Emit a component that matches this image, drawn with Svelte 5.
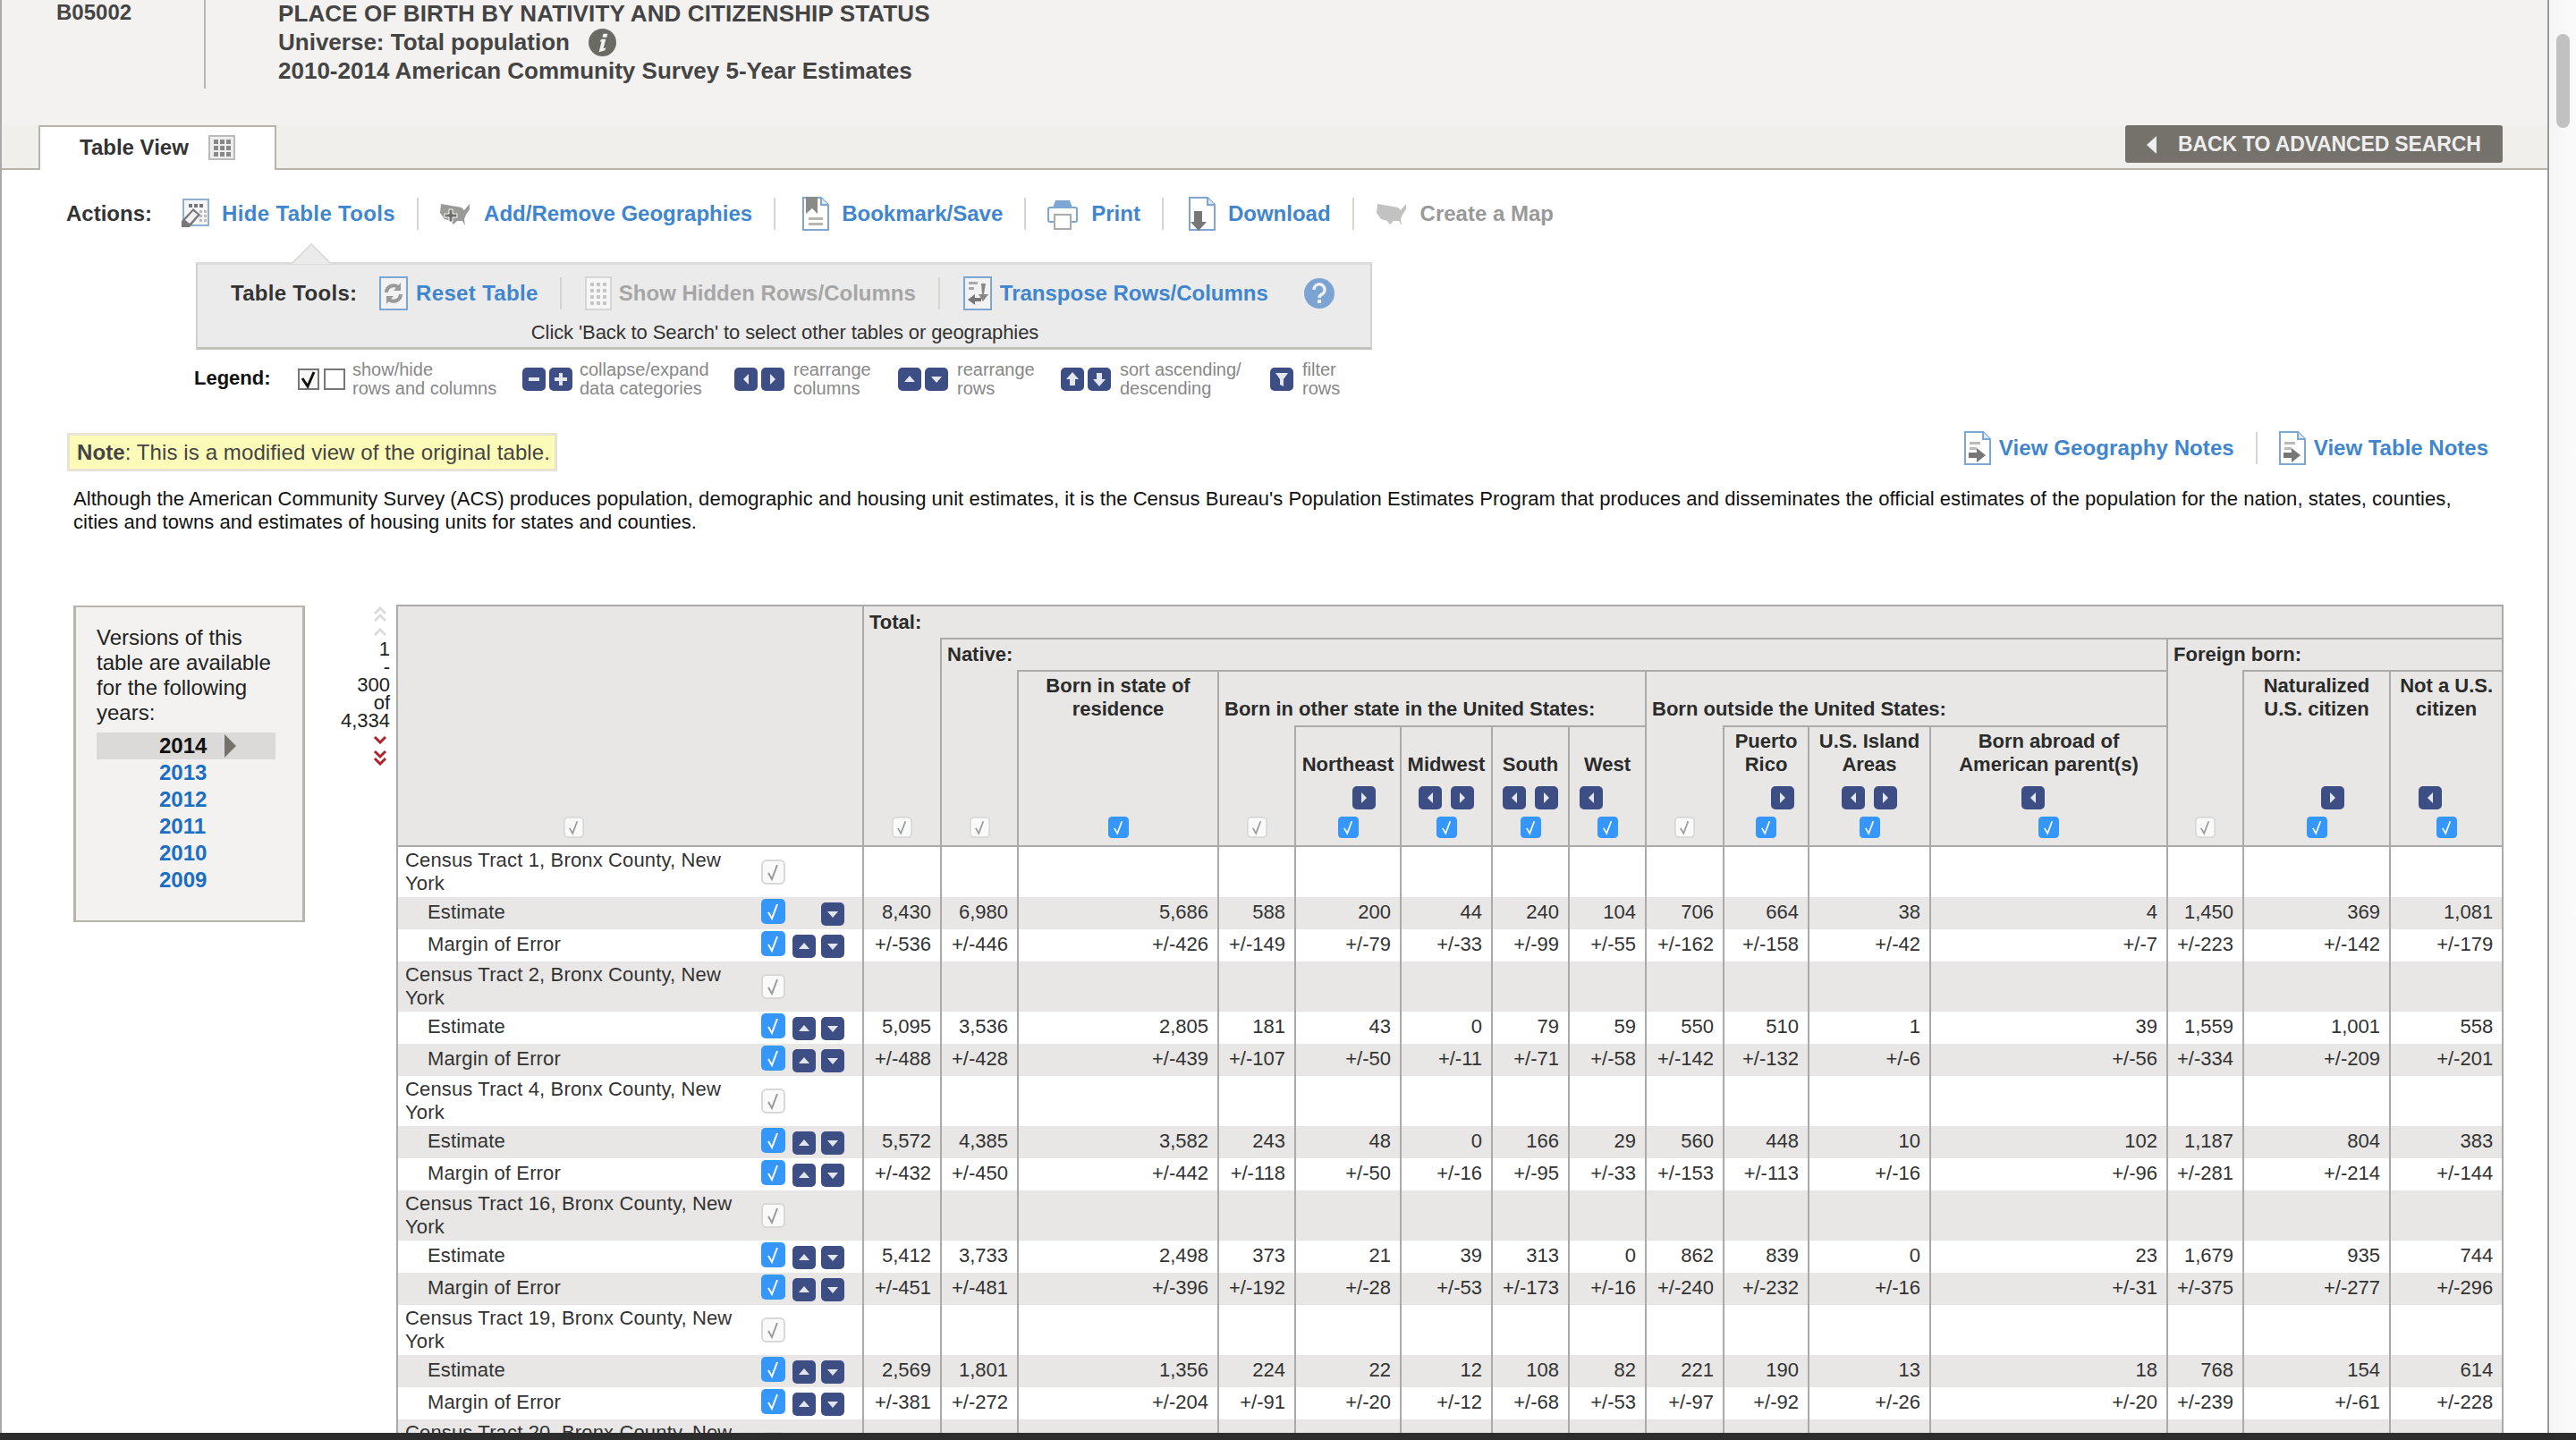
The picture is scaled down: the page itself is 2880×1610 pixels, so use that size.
<script>
  const tracts = [
    ['Census Tract 1, Bronx County, New York',
      '8,430 6,980 5,686 588 200 44 240 104 706 664 38 4 1,450 369 1,081',
      '+/-536 +/-446 +/-426 +/-149 +/-79 +/-33 +/-99 +/-55 +/-162 +/-158 +/-42 +/-7 +/-223 +/-142 +/-179'],
    ['Census Tract 2, Bronx County, New York',
      '5,095 3,536 2,805 181 43 0 79 59 550 510 1 39 1,559 1,001 558',
      '+/-488 +/-428 +/-439 +/-107 +/-50 +/-11 +/-71 +/-58 +/-142 +/-132 +/-6 +/-56 +/-334 +/-209 +/-201'],
    ['Census Tract 4, Bronx County, New York',
      '5,572 4,385 3,582 243 48 0 166 29 560 448 10 102 1,187 804 383',
      '+/-432 +/-450 +/-442 +/-118 +/-50 +/-16 +/-95 +/-33 +/-153 +/-113 +/-16 +/-96 +/-281 +/-214 +/-144'],
    ['Census Tract 16, Bronx County, New York',
      '5,412 3,733 2,498 373 21 39 313 0 862 839 0 23 1,679 935 744',
      '+/-451 +/-481 +/-396 +/-192 +/-28 +/-53 +/-173 +/-16 +/-240 +/-232 +/-16 +/-31 +/-375 +/-277 +/-296'],
    ['Census Tract 19, Bronx County, New York',
      '2,569 1,801 1,356 224 22 12 108 82 221 190 13 18 768 154 614',
      '+/-381 +/-272 +/-204 +/-91 +/-20 +/-12 +/-68 +/-53 +/-97 +/-92 +/-26 +/-20 +/-239 +/-61 +/-228'],
    ['Census Tract 20, Bronx County, New York', '', '']
  ];
  const rows = [];
  tracts.forEach((t, i) => {
    rows.push({ kind: 'tract', label: t[0], vals: Array(15).fill('') });
    rows.push({ kind: 'metric', label: 'Estimate', first: i === 0, vals: t[1] ? t[1].split(' ') : Array(15).fill('') });
    rows.push({ kind: 'metric', label: 'Margin of Error', vals: t[2] ? t[2].split(' ') : Array(15).fill('') });
  });
  const widths = [393, 126, 87, 86, 224, 86, 118, 102, 86, 86, 87, 95, 136, 265, 85, 164, 126];
  const controls = [
    { on: false }, { on: false }, { on: true }, { on: false },
    { on: true, r: true }, { on: true, l: true, r: true }, { on: true, l: true, r: true }, { on: true, l: true },
    { on: false }, { on: true, r: true }, { on: true, l: true, r: true }, { on: true, l: true },
    { on: false }, { on: true, r: true }, { on: true, l: true }
  ];
  const years = ['2013', '2012', '2011', '2010', '2009'];
</script>

{#snippet nav(dir, hidden = false)}
  <svg class="nav" class:vh={hidden} viewBox="0 0 26 26" aria-hidden="true">
    <rect width="26" height="26" rx="5" fill="#3d4e84" />
    {#if dir === 'l'}<path d="M16 7v12l-6-6z" fill="#e4e6ee" />
    {:else if dir === 'r'}<path d="M10 7v12l6-6z" fill="#e4e6ee" />
    {:else if dir === 'u'}<path d="M7 16h12l-6-7z" fill="#e4e6ee" />
    {:else if dir === 'd'}<path d="M7 10h12l-6 7z" fill="#e4e6ee" />
    {:else if dir === 'minus'}<path d="M7 11h12v4H7z" fill="#e4e6ee" />
    {:else if dir === 'plus'}<path d="M11 6h4v5h5v4h-5v5h-4v-5H6v-4h5z" fill="#e4e6ee" />
    {:else if dir === 'bu'}<path d="M13 5l7 8h-4v7h-6v-7H6z" fill="#e4e6ee" />
    {:else if dir === 'bd'}<path d="M13 21l7-8h-4V6h-6v7H6z" fill="#e4e6ee" />
    {:else}<path d="M6 6h14l-5 7v8l-4-2v-6z" fill="#e4e6ee" />{/if}
  </svg>
{/snippet}

{#snippet check(on, small = false)}
  <svg class="check" class:small viewBox="0 0 27 28" aria-hidden="true">
    {#if on}
      <rect width="27" height="28" rx="5" fill="#3596fb" />
      <path d="M8 15l4 7 6-16" fill="none" stroke="#fff" stroke-width="2" />
    {:else}
      <rect x="1" y="1" width="25" height="26" rx="5" fill="#fafafa" stroke="#d8d8d6" stroke-width="2" />
      <path d="M8 15l4 7 6-16" fill="none" stroke="#999" stroke-width="2" />
    {/if}
  </svg>
{/snippet}

{#snippet docIcon(kind)}
  <svg class="ic doc" viewBox="0 0 30 38" aria-hidden="true">
    <path d="M1 1h20l8 8v28H1z" fill="#fff" stroke="#7da6d2" stroke-width="2" />
    <path d="M21 1v8h8" fill="#dfe8f2" stroke="#7da6d2" stroke-width="2" />
    {#if kind === 'bookmark'}
      <path d="M4 0h13v19l-6-6-7 6z" fill="#8a8a86" />
      <path d="M7 23h16v3H7zM7 29h16v3H7z" fill="#b8b6ae" />
    {:else if kind === 'download'}
      <path d="M6 16h9v12h5l-9 10-9-10h4z" fill="#777" />
    {:else}
      <path d="M6 12h12v3H6zM6 18h8v3H6z" fill="#bdbbb4" />
      <path d="M5 24h9v-5l10 8-10 8v-5H5z" fill="#777" />
    {/if}
  </svg>
{/snippet}

{#snippet mapIcon(plus)}
  <svg class="ic map" viewBox="0 0 34 26" aria-hidden="true">
    <path d="M1 2l12 2 11 2 3 3 6-7v6l-4 6-2 5 1 7-3-5-6 0-4 4-3-4-7-2-5-7z" fill={plus ? '#9a9a96' : '#c2c2c0'} />
    {#if plus}<path d="M5 13h5v-5h4v5h5v4h-5v5h-4v-5H5z" fill="#6f6f6c" stroke="#fff" stroke-width="1" />{/if}
  </svg>
{/snippet}

{#snippet dots(x, y, cols, rowsN, step, size, fill)}
  {#each Array(rowsN) as _, r}
    {#each Array(cols) as _, c}
      <rect x={x + c * step} y={y + r * step} width={size} height={size} fill={fill} />
    {/each}
  {/each}
{/snippet}

<div class="page">
  <div class="main">
    <header class="head">
      <div class="titles">
        <div class="code">B05002</div>
        <div class="title">
          <div class="line1">PLACE OF BIRTH BY NATIVITY AND CITIZENSHIP STATUS</div>
          <div class="uni">Universe: Total population
            <svg class="info" viewBox="0 0 32 32" aria-hidden="true">
              <circle cx="16" cy="16" r="16" fill="#6b6b66" />
              <path d="M17 6h5l-1 4h-5zM15 12h5l-3 11 3-1-1 3-7 2 3-12h-2z" fill="#f3f2f0" />
            </svg>
          </div>
          <div>2010-2014 American Community Survey 5-Year Estimates</div>
        </div>
      </div>
      <div class="tabs">
        <div class="tab">Table View
          <svg class="tabicon" viewBox="0 0 30 28" aria-hidden="true">
            <rect x="1" y="1" width="28" height="26" fill="#eee" stroke="#bbb" stroke-width="2" />
            {@render dots(6, 5, 3, 3, 7, 5, '#888')}
          </svg>
        </div>
        <div class="back"><span class="backarrow"></span>BACK TO ADVANCED SEARCH</div>
      </div>
    </header>

    <div class="actions">
      <b class="alabel">Actions:</b>
      <svg class="ic hidetools" viewBox="0 0 32 34" aria-hidden="true">
        <rect x="3" y="1" width="28" height="29" fill="#f4f6f8" stroke="#8fb0d0" stroke-width="2" />
        {@render dots(9, 6, 3, 1, 6, 4, '#777')}
        {@render dots(21, 13, 2, 3, 5, 3, '#bbb')}
        <path d="M14 11l8 7-12 14H1v-7z" fill="#777" />
        <path d="M14 14l5 4-9 10-5-4z" fill="#f2f2f2" />
      </svg>
      <a class="link wide">Hide Table Tools</a><i class="sep"></i>
      {@render mapIcon(true)}
      <a class="link">Add/Remove Geographies</a><i class="sep after-geo"></i>
      {@render docIcon('bookmark')}
      <a class="link">Bookmark/Save</a><i class="sep"></i>
      <svg class="ic print" viewBox="0 0 34 36" aria-hidden="true">
        <path d="M9 3h16l3 8H6z" fill="#7da6d2" />
        <rect x="1" y="11" width="32" height="16" rx="2" fill="#fff" stroke="#7da6d2" stroke-width="2" />
        <rect x="8" y="19" width="18" height="16" fill="#fff" stroke="#aaa" stroke-width="2" />
      </svg>
      <a class="link">Print</a><i class="sep after-print"></i>
      {@render docIcon('download')}
      <a class="link">Download</a><i class="sep after-dl"></i>
      {@render mapIcon(false)}
      <span class="link off">Create a Map</span>
    </div>

    <div class="tools">
      <svg class="tip" viewBox="0 0 44 24" aria-hidden="true">
        <path d="M0 23L22 1l22 22" fill="#ebebeb" stroke="#dcdcda" stroke-width="2" />
      </svg>
      <div class="toolrow">
        <b class="tlabel">Table Tools:</b>
        <svg class="ic reset" viewBox="0 0 32 38" aria-hidden="true">
          <rect x="1" y="1" width="30" height="36" fill="#f2f2f2" stroke="#7da6d2" stroke-width="2" />
          <path d="M8 18a8 8 0 0 1 14-5" fill="none" stroke="#999" stroke-width="4" />
          <path d="M24 7v9h-8z" fill="#999" />
          <path d="M24 20a8 8 0 0 1-14 5" fill="none" stroke="#999" stroke-width="4" />
          <path d="M8 31v-9h8z" fill="#999" />
        </svg>
        <a class="link wide">Reset Table</a><i class="sep sm"></i>
        <svg class="ic hid" viewBox="0 0 30 38" aria-hidden="true">
          <rect x="1" y="1" width="28" height="36" fill="#f6f6f6" stroke="#d6d6d6" stroke-width="2" />
          {@render dots(6, 7, 3, 4, 7, 4, '#c6c6c6')}
        </svg>
        <span class="link off2">Show Hidden Rows/Columns</span><i class="sep sm2"></i>
        <svg class="ic trans" viewBox="0 0 32 38" aria-hidden="true">
          <rect x="1" y="1" width="30" height="36" fill="#f2f2f2" stroke="#7da6d2" stroke-width="2" />
          <path d="M6 6h10v3H6zM6 12h6v3H6z" fill="#aaa" />
          <path d="M20 8h5l-2 12h5l-6 8-5-8h4z" fill="#888" />
          <path d="M5 26l8-6v4h7v4h-7v4z" fill="#777" />
        </svg>
        <a class="link">Transpose Rows/Columns</a>
        <svg class="help" viewBox="0 0 34 34" aria-hidden="true">
          <circle cx="17" cy="17" r="17" fill="#7ba4d2" />
          <path d="M11 13a6 6 0 1 1 9 5c-2 1-3 2-3 4" fill="none" stroke="#eef2f7" stroke-width="3.4" />
          <rect x="15" y="24" width="4" height="4" fill="#eef2f7" />
        </svg>
      </div>
      <div class="clicknote">Click 'Back to Search' to select other tables or geographies</div>
    </div>

    <div class="legend">
      <b class="lglabel">Legend:</b>
      <div class="lgitem first">
        <svg class="lgcheck" viewBox="0 0 24 24" aria-hidden="true">
          <rect x="1" y="1" width="22" height="22" fill="#f7f7f5" stroke="#777" stroke-width="2" />
          <path d="M5 11l6 9 7-16" fill="none" stroke="#111" stroke-width="3" />
        </svg>
        <svg class="lgcheck" viewBox="0 0 24 24" aria-hidden="true">
          <rect x="1" y="1" width="22" height="22" fill="#fff" stroke="#777" stroke-width="2" />
        </svg>
        <span>show/hide<br />rows and columns</span>
      </div>
      <div class="lgitem i2">{@render nav('minus')}{@render nav('plus')}<span>collapse/expand<br />data categories</span></div>
      <div class="lgitem i3">{@render nav('l')}{@render nav('r')}<span>rearrange<br />columns</span></div>
      <div class="lgitem i4">{@render nav('u')}{@render nav('d')}<span>rearrange<br />rows</span></div>
      <div class="lgitem i5">{@render nav('bu')}{@render nav('bd')}<span>sort ascending/<br />descending</span></div>
      <div class="lgitem i6">{@render nav('f')}<span>filter<br />rows</span></div>
    </div>

    <div class="noterow">
      <div class="note"><b>Note</b>: This is a modified view of the original table.</div>
      <div class="notelinks">
        {@render docIcon('note')}<a class="link geo">View Geography Notes</a><i class="sep"></i>
        {@render docIcon('note')}<a class="link">View Table Notes</a>
      </div>
    </div>

    <p class="para">Although the American Community Survey (ACS) produces population, demographic and housing unit estimates, it is the Census Bureau's Population Estimates Program that produces and disseminates the official estimates of the population for the nation, states, counties, cities and towns and estimates of housing units for states and counties.</p>

    <div class="lower">
      <aside class="versions">
        <div class="vtext">Versions of this table are available for the following years:</div>
        <div class="yr sel"><span>2014</span><i class="yrarrow"></i></div>
        {#each years as y}<div class="yr"><a class="ylink">{y}</a></div>{/each}
      </aside>

      <div class="pager">
        <svg class="chev up2" viewBox="0 0 16 18" aria-hidden="true"><path d="M2 8l6-6 6 6M2 16l6-6 6 6" fill="none" stroke="#dcdcdc" stroke-width="3" /></svg>
        <svg class="chev up1" viewBox="0 0 16 10" aria-hidden="true"><path d="M2 8l6-6 6 6" fill="none" stroke="#dcdcdc" stroke-width="3" /></svg>
        <div class="ptext">1<br />-<br />300<br />of<br />4,334</div>
        <svg class="chev dn1" viewBox="0 0 16 10" aria-hidden="true"><path d="M2 2l6 6 6-6" fill="none" stroke="#b0232a" stroke-width="3" /></svg>
        <svg class="chev dn2" viewBox="0 0 16 18" aria-hidden="true"><path d="M2 2l6 6 6-6M2 10l6 6 6-6" fill="none" stroke="#b0232a" stroke-width="3" /></svg>
      </div>

      <table class="data">
        <colgroup>{#each widths as w}<col style="width:{w}px" />{/each}</colgroup>
        <thead>
          <tr class="r1">
            <th colspan="2" rowspan="4" class="noleft"></th>
            <th colspan="15" class="lab">Total:</th>
          </tr>
          <tr class="r2">
            <th rowspan="3"></th>
            <th colspan="11" class="lab top">Native:</th>
            <th colspan="3" class="lab top">Foreign born:</th>
          </tr>
          <tr class="r3">
            <th rowspan="2"></th>
            <th rowspan="2" class="top hd">Born in state of residence</th>
            <th colspan="5" class="lab top bot">Born in other state in the United States:</th>
            <th colspan="4" class="lab top bot">Born outside the United States:</th>
            <th rowspan="2"></th>
            <th rowspan="2" class="top hd">Naturalized U.S. citizen</th>
            <th rowspan="2" class="top hd">Not a U.S. citizen</th>
          </tr>
          <tr class="r4">
            <th></th>
            <th class="top subh">Northeast</th>
            <th class="top subh">Midwest</th>
            <th class="top subh">South</th>
            <th class="top subh">West</th>
            <th></th>
            <th class="top subh">Puerto Rico</th>
            <th class="top subh">U.S. Island Areas</th>
            <th class="top subh">Born abroad of American parent(s)</th>
          </tr>
          <tr class="r5">
            <th class="noleft ctl"><div class="ctlin">{@render check(false, true)}</div></th>
            <th class="noleft ctl"></th>
            {#each controls as c}
              <th class="ctl">
                <div class="ctlin">
                  {#if c.l || c.r}
                    <div class="pair">{@render nav('l', !c.l)}{@render nav('r', !c.r)}</div>
                  {/if}
                  {@render check(c.on, true)}
                </div>
              </th>
            {/each}
          </tr>
        </thead>
        <tbody>
          {#each rows as row, i}
            <tr class:gray={i % 2 === 1} class={row.kind}>
              <td class="noleft rowlabel">{row.label}</td>
              <td class="noleft rowctl">
                <div class="rowctlin">
                  {@render check(row.kind === 'metric')}
                  {#if row.kind === 'metric'}
                    {@render nav('u', row.first)}
                    {@render nav('d')}
                  {/if}
                </div>
              </td>
              {#each row.vals as v}<td class="num">{v}</td>{/each}
            </tr>
          {/each}
        </tbody>
      </table>
    </div>
  </div>
  <div class="scroll"><div class="thumb"></div></div>
  <div class="dock"></div>
</div>

<style>
  :global(body) { margin: 0; background: #fff; }
  .page {
    position: relative;
    display: flex;
    width: 2880px;
    height: 1610px;
    overflow: hidden;
    font-family: "Liberation Sans", Arial, sans-serif;
    font-size: 22px;
    color: #222;
  }
  .main {
    box-sizing: border-box;
    width: 2850px;
    height: 1610px;
    border-left: 2px solid #aaa;
    border-right: 2px solid #999;
    overflow: hidden;
    flex: none;
  }
  .scroll { flex: 1; background: linear-gradient(90deg, #f5f5f5, #fbfbfb); padding: 38px 7px 0 8px; }
  .thumb { height: 105px; border-radius: 8px; background: #c1c1c1; }
  .dock { position: absolute; left: 0; right: 0; bottom: 0; height: 8px; background: #2d2d2d; }

  .head { background: #f3f2f0; height: 190px; box-sizing: border-box; border-bottom: 2px solid #b9b3ac; }
  .titles { display: flex; height: 140px; color: #444; font-weight: bold; }
  .code { box-sizing: border-box; width: 228px; height: 99px; padding: 0 0 0 61px; border-right: 2px solid #b9b6b0; line-height: 27px; font-size: 24px; }
  .title { padding-left: 81px; font-size: 26px; line-height: 32px; margin-top: -1px; }
  .line1 { letter-spacing: 0.12px; }
  .uni { display: flex; align-items: center; }
  .info { width: 31px; height: 31px; margin-left: 21px; }
  .tabs { display: flex; justify-content: space-between; height: 48px; padding: 0 50px 0 41px; background: #f0efeb; }
  .tab {
    box-sizing: border-box; width: 266px; height: 50px; display: flex; align-items: center;
    padding: 0 0 3px 44px; background: #fff; border: 2px solid #b9b3ac; border-bottom: 0;
    font-weight: bold; font-size: 24px; color: #333;
  }
  .tabicon { width: 30px; height: 28px; margin-left: 22px; }
  .back {
    width: 422px; height: 42px; box-sizing: border-box; display: flex; align-items: center; padding: 1px 0 0 24px;
    background: #75726b; border-radius: 3px; color: #eeeeef; font-weight: bold; font-size: 23px; white-space: nowrap; letter-spacing: -0.15px;
  }
  .backarrow { width: 0; height: 0; border: 10px solid transparent; border-right: 11px solid #eee; border-left: 0; margin-right: 24px; }

  a, .link { text-decoration: none; }
  .link { font-weight: bold; font-size: 24px; color: #3f86cf; white-space: nowrap; }
  .link.wide { letter-spacing: 0.35px; }
  .link.geo { letter-spacing: 0.1px; }
  .off { color: #999; }
  .off2 { color: #a6a6a6; }
  .sep { display: block; width: 2px; height: 36px; background: #d8d5d0; flex: none; margin: 0 24px; }
  .sep.sm { margin: 0 26px 0 24px; }
  .sep.sm2 { margin: 0 26px 0 25px; }
  .sep.after-geo { margin-right: 30px; }
  .sep.after-print { margin-right: 28px; }
  .sep.after-dl { margin-right: 25px; }

  .actions { display: flex; align-items: center; height: 38px; margin: 30px 0 0 72px; }
  .alabel { width: 128px; font-size: 24px; color: #333; }
  .ic { flex: none; margin-right: 15px; }
  .hidetools { width: 32px; height: 34px; margin-right: 14px; }
  .map { width: 34px; height: 26px; }
  .doc { width: 30px; height: 38px; margin-right: 14px; }
  .print { width: 34px; height: 36px; margin-right: 15px; }

  .tools {
    position: relative; box-sizing: border-box; width: 1315px; height: 98px; margin: 35px 0 0 217px;
    background: #ebebeb; border-top: 3px solid #dcdcda; border-bottom: 3px solid #c3c0bb; border-left: 2px solid #d3d1cd; border-right: 2px solid #d3d1cd;
  }
  .tip { position: absolute; left: 105px; top: -24px; width: 44px; height: 24px; }
  .toolrow { display: flex; align-items: center; height: 38px; margin-top: 13px; padding-left: 37px; }
  .tlabel { width: 166px; font-size: 24px; color: #333; letter-spacing: 0.3px; }
  .reset, .trans { width: 32px; height: 38px; margin-right: 9px; }
  .hid { width: 30px; height: 38px; margin-right: 8px; }
  .help { width: 34px; height: 34px; margin-left: 40px; }
  .clicknote { text-align: center; margin-top: 12px; line-height: 26px; padding-left: 2px; color: #333; letter-spacing: -0.1px; }

  .legend { display: flex; align-items: center; height: 44px; margin: 10px 0 0 215px; }
  .lglabel { width: 116px; font-size: 22px; color: #111; flex: none; }
  .lgitem { display: flex; align-items: center; color: #888; font-size: 20px; line-height: 21px; white-space: nowrap; flex: none; padding-top: 1px; }
  .lgitem span { margin-left: 3px; }
  .lgitem .nav { margin-right: 4px; }
  .lgitem .nav + span { margin-left: 6px; }
  .lgitem.i2 .nav + span { margin-left: 4px; }
  .lgcheck { width: 24px; height: 24px; margin-right: 5px; }
  .lgitem.first { width: 251px; }
  .lgitem.i2 { width: 237px; }
  .lgitem.i3 { width: 183px; }
  .lgitem.i4 { width: 182px; }
  .lgitem.i5 { width: 234px; }

  .noterow { display: flex; justify-content: space-between; align-items: flex-start; margin: 39px 66px 0 73px; }
  .note {
    box-sizing: border-box; height: 43px; width: 548px; background: #fdfbb8; border: 3px solid #e9e3d6;
    display: flex; align-items: center; padding-left: 8px; font-size: 24px; color: #444; white-space: pre; letter-spacing: 0.1px;
  }
  .notelinks { display: flex; align-items: center; margin-top: -2px; }
  .notelinks .doc { margin-right: 9px; }

  .para { width: 2700px; margin: 18px 0 0 80px; line-height: 26px; color: #111; letter-spacing: 0.05px; }

  .lower { display: flex; align-items: flex-start; margin: 79px 0 0 80px; }
  .versions {
    box-sizing: border-box; width: 259px; height: 354px; flex: none; margin-top: 1px;
    background: #f3f2f0; border: 3px solid #b9b3ac; border-width: 2px 3px; padding: 20px 0 0 23px; font-size: 24px; line-height: 28px;
  }
  .vtext { font-size: 24px; color: #222; width: 212px; }
  .yr { position: relative; width: 200px; height: 30px; line-height: 30px; text-align: left; padding-left: 70px; box-sizing: border-box; font-weight: bold; }
  .yr.sel { margin-top: 8px; background: #dbdad8; color: #111; }
  .ylink { color: #1b6ec2; }
  .yrarrow { position: absolute; left: 143px; top: 2px; width: 0; height: 0; border: 13px solid transparent; border-left: 13px solid #75726b; border-right: 0; }

  .pager { width: 95px; flex: none; text-align: right; display: flex; flex-direction: column; align-items: flex-end; color: #222; font-size: 22px; line-height: 20px; }
  .chev { display: block; width: 16px; margin-right: 3px; }
  .up2 { height: 18px; margin-top: 2px; }
  .up1 { height: 10px; margin-top: 6px; }
  .ptext { margin-top: 4px; }
  .dn1 { height: 10px; margin-top: 6px; }
  .dn2 { height: 18px; margin-top: 6px; }

  table.data {
    table-layout: fixed; width: 2356px; margin-left: 7px; flex: none;
    border-collapse: separate; border-spacing: 0; border: 2px solid #aaa; border-bottom: 0;
  }
  th, td { box-sizing: border-box; padding: 0; border-left: 2px solid #aaa; }
  .noleft { border-left: 0; }
  thead { background: #e8e7e5; }
  th { font-weight: bold; color: #2b2b2b; line-height: 26px; vertical-align: top; }
  th.top { border-top: 2px solid #aaa; }
  .r1 { height: 35px; }
  .r2 { height: 36px; }
  .r3 { height: 62px; }
  .r4 { height: 59px; }
  .r5 { height: 77px; }
  .lab { text-align: left; padding-left: 6px; vertical-align: middle; white-space: nowrap; }
  .lab.bot { vertical-align: bottom; padding-bottom: 5px; }
  .hd { padding: 3px 6px 0; text-align: center; }
  .subh { padding: 2px 2px 2px; vertical-align: bottom; text-align: center; }
  .ctl { border-bottom: 2px solid #aaa; vertical-align: bottom; }
  .ctlin { display: flex; flex-direction: column; align-items: center; padding-bottom: 8px; }
  .pair { display: flex; gap: 10px; margin-bottom: 8px; }
  .nav { display: block; width: 26px; height: 26px; flex: none; }
  .nav.vh { visibility: hidden; }
  .check { display: block; width: 27px; height: 28px; flex: none; }
  .check.small { width: 23px; height: 24px; }

  td { color: #333; }
  tr.gray td { background: #e8e7e5; }
  tr.tract { height: 56px; }
  tr.metric { height: 36px; }
  .rowlabel { padding: 0 5px 0 8px; line-height: 26px; letter-spacing: 0.15px; }
  tr.metric .rowlabel { padding: 0 0 3px 33px; }
  .rowctlin { display: flex; align-items: flex-start; padding-left: 13px; gap: 6px; }
  tr.metric .rowctlin .check { margin: -2px 2px 0 0; }
  tr.metric .rowctlin .nav { margin-top: 2px; }
  .num { text-align: right; padding-right: 10px; white-space: nowrap; }
  tr.metric .num { padding-bottom: 3px; }
</style>
